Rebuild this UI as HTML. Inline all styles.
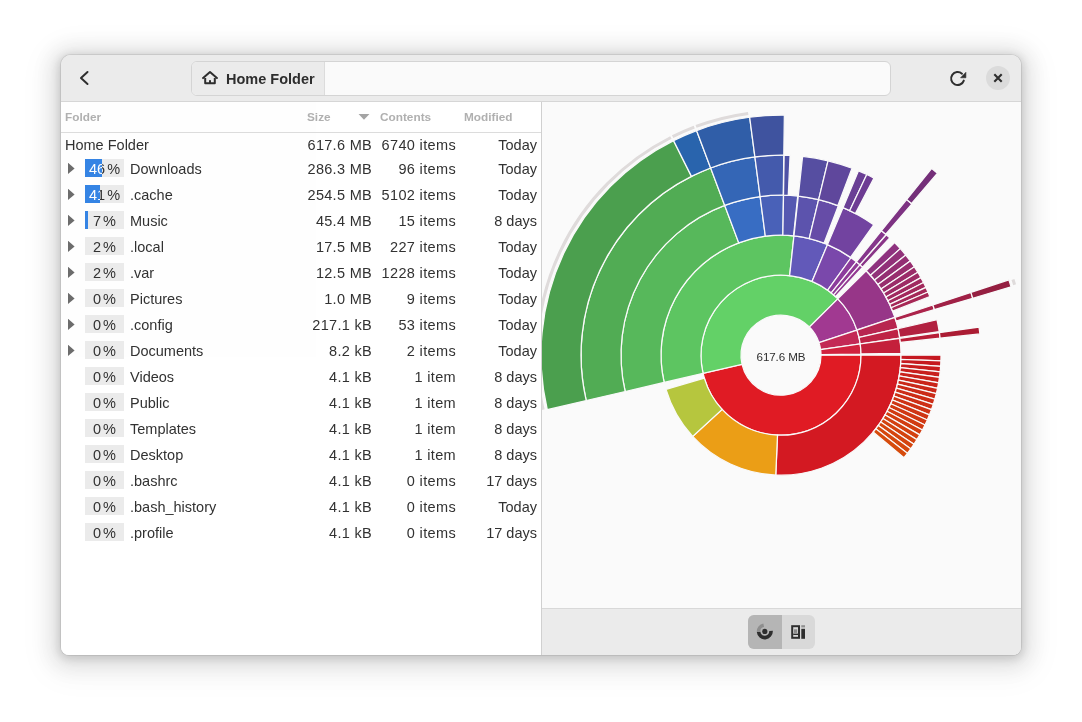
<!DOCTYPE html>
<html><head><meta charset="utf-8"><title>Disk Usage Analyzer</title>
<style>
html,body{margin:0;padding:0}
body{width:1082px;height:722px;background:#fff;overflow:hidden;position:relative;font-family:"Liberation Sans",sans-serif;font-size:14.5px;color:#323232}
#win{position:absolute;left:61px;top:55px;width:960px;height:600px;border-radius:10px 10px 8px 8px;background:#fafafa;overflow:hidden;
 box-shadow:0 2px 8px 2px rgba(0,0,0,.13),0 3px 20px 10px rgba(0,0,0,.09),0 6px 32px 16px rgba(0,0,0,.04),0 0 0 1px rgba(0,0,0,.07)}
#hdr{will-change:transform;opacity:.999;position:absolute;left:0;top:0;width:960px;height:46px;background:#ebebeb;border-bottom:1px solid #d6d6d6}
#path{position:absolute;left:130px;top:6px;width:698px;height:33px;border:1px solid #d4d4d4;border-radius:6px;background:#fafafa;overflow:hidden}
#crumb{position:absolute;left:0;top:0;width:132px;height:33px;background:#ebebeb;border-right:1px solid #dcdcdc}
#crumb span{position:absolute;left:34px;top:9px;font-weight:bold;font-size:14.5px;letter-spacing:0;color:#2e2e2e;white-space:nowrap}
#left{will-change:transform;opacity:.999;position:absolute;left:0;top:47px;width:480px;height:553px;background:#fff;border-right:1px solid #d0d0d0}
#colhdr{position:absolute;left:0;top:0;width:480px;height:30px;border-bottom:1px solid #dcdcdc;font-size:11.8px;color:#b0b0b0;font-weight:bold}
#colhdr span{position:absolute;top:8px}
.row{position:absolute;left:0;width:480px;height:26px;white-space:nowrap}
.row span{position:absolute;top:4px}
.row .n0{left:4px}
.row .n{left:69px}
.row .s{right:169px;text-align:right;letter-spacing:.3px}
.row .c{right:85px;text-align:right;letter-spacing:.35px}
.row .m{right:4px;text-align:right}
.row .p{left:24px;top:2px;width:39px;height:18px;background:#ebebeb}
.row .q{left:24px;top:4px;width:39px;text-align:center;word-spacing:-2px}
.row .f{left:24px;top:2px;height:18px;background:#3584e4;overflow:hidden}
.row .f b{position:absolute;left:0;top:2px;width:39px;text-align:center;color:#fff;font-weight:normal;word-spacing:-2px}
.row .t{left:7px;top:5.7px;width:6.6px;height:11.4px;background:#6c6c6c;clip-path:polygon(0 0,100% 50%,0 100%)}
#right{position:absolute;left:481px;top:47px;width:479px;height:506px;background:#fafafa}
#abar{position:absolute;left:481px;top:553px;width:479px;height:47px;background:#ebebeb;border-top:1px solid #d8d8d8;box-sizing:border-box}
#tog{position:absolute;left:206px;top:6px;width:67px;height:34px;border-radius:6px;background:#d9d9d9;overflow:hidden}
#tog b{position:absolute;left:0;top:0;width:34px;height:34px;background:#b5b5b5}
#chart{position:absolute;left:0;top:0;width:1082px;height:722px;pointer-events:none;opacity:.999;will-change:transform;clip-path:inset(102px 61px 114px 542px)}
</style></head><body>
<div id="win">
 <div id="hdr">
  <svg style="position:absolute;left:0;top:0" width="960" height="46" viewBox="0 0 960 46">
   <path d="M26.5 17 L20 23 L26.5 29" fill="none" stroke="#2e2e2e" stroke-width="2" stroke-linecap="round" stroke-linejoin="round"/>
   <g fill="none" stroke="#2e2e2e" stroke-width="2" stroke-linecap="round" stroke-linejoin="round">
    <path d="M902.8 25.6 A6.5 6.5 0 1 1 901.0 18.7"/>
   </g>
   <path d="M904.9 17.3 L904.9 22.8 L899.6 22.8 Z" fill="#2e2e2e" stroke="#2e2e2e" stroke-width=".6" stroke-linejoin="round"/>
   <circle cx="937" cy="23" r="12" fill="#dbdbdb"/>
   <path d="M933.3 19.3 L940.7 26.7 M940.7 19.3 L933.3 26.7" fill="none" stroke="#2e2e2e" stroke-width="2.1" stroke-linecap="butt"/>
  </svg>
  <div id="path"><div id="crumb"><svg style="position:absolute;left:10px;top:9px" width="16" height="16" viewBox="0 0 16 16"><path d="M1.1 7.1 L8 1.1 L14.9 7.1" fill="none" stroke="#2e2e2e" stroke-width="2" stroke-linejoin="round" stroke-linecap="round"/><path d="M3.2 7 V12.3 H12.8 V7" fill="none" stroke="#2e2e2e" stroke-width="2" stroke-linejoin="round"/><rect x="7" y="9.2" width="2" height="3.6" fill="#2e2e2e"/></svg><span>Home Folder</span></div></div>
 </div>
 <div id="left">
  <div id="colhdr"><span style="left:4px">Folder</span><span style="left:246px">Size</span><span style="left:319px">Contents</span><span style="left:403px">Modified</span><i style="position:absolute;left:297.3px;top:11.8px;width:11.4px;height:6px;background:#a4a4a4;clip-path:polygon(0 0,100% 0,50% 100%)"></i></div>
  <div class="row" style="top:31px;height:24px"><span class="n0">Home Folder</span><span class="s">617.6 MB</span><span class="c">6740 items</span><span class="m">Today</span></div>
  <div class="row" style="top:55px"><span class="t"></span><span class="p"></span><span class="q">46 %</span><span class="f" style="width:17.2px"><b>46 %</b></span><span class="n">Downloads</span><span class="s">286.3 MB</span><span class="c">96 items</span><span class="m">Today</span></div>
  <div class="row" style="top:81px"><span class="t"></span><span class="p"></span><span class="q">41 %</span><span class="f" style="width:15.2px"><b>41 %</b></span><span class="n">.cache</span><span class="s">254.5 MB</span><span class="c">5102 items</span><span class="m">Today</span></div>
  <div class="row" style="top:107px"><span class="t"></span><span class="p"></span><span class="q">7 %</span><span class="f" style="width:2.7px"><b>7 %</b></span><span class="n">Music</span><span class="s">45.4 MB</span><span class="c">15 items</span><span class="m">8 days</span></div>
  <div class="row" style="top:133px"><span class="t"></span><span class="p"></span><span class="q">2 %</span><span class="n">.local</span><span class="s">17.5 MB</span><span class="c">227 items</span><span class="m">Today</span></div>
  <div class="row" style="top:159px"><span class="t"></span><span class="p"></span><span class="q">2 %</span><span class="n">.var</span><span class="s">12.5 MB</span><span class="c">1228 items</span><span class="m">Today</span></div>
  <div class="row" style="top:185px"><span class="t"></span><span class="p"></span><span class="q">0 %</span><span class="n">Pictures</span><span class="s">1.0 MB</span><span class="c">9 items</span><span class="m">Today</span></div>
  <div class="row" style="top:211px"><span class="t"></span><span class="p"></span><span class="q">0 %</span><span class="n">.config</span><span class="s">217.1 kB</span><span class="c">53 items</span><span class="m">Today</span></div>
  <div class="row" style="top:237px"><span class="t"></span><span class="p"></span><span class="q">0 %</span><span class="n">Documents</span><span class="s">8.2 kB</span><span class="c">2 items</span><span class="m">Today</span></div>
  <div class="row" style="top:263px"><span class="p"></span><span class="q">0 %</span><span class="n">Videos</span><span class="s">4.1 kB</span><span class="c">1 item</span><span class="m">8 days</span></div>
  <div class="row" style="top:289px"><span class="p"></span><span class="q">0 %</span><span class="n">Public</span><span class="s">4.1 kB</span><span class="c">1 item</span><span class="m">8 days</span></div>
  <div class="row" style="top:315px"><span class="p"></span><span class="q">0 %</span><span class="n">Templates</span><span class="s">4.1 kB</span><span class="c">1 item</span><span class="m">8 days</span></div>
  <div class="row" style="top:341px"><span class="p"></span><span class="q">0 %</span><span class="n">Desktop</span><span class="s">4.1 kB</span><span class="c">1 item</span><span class="m">8 days</span></div>
  <div class="row" style="top:367px"><span class="p"></span><span class="q">0 %</span><span class="n">.bashrc</span><span class="s">4.1 kB</span><span class="c">0 items</span><span class="m">17 days</span></div>
  <div class="row" style="top:393px"><span class="p"></span><span class="q">0 %</span><span class="n">.bash_history</span><span class="s">4.1 kB</span><span class="c">0 items</span><span class="m">Today</span></div>
  <div class="row" style="top:419px"><span class="p"></span><span class="q">0 %</span><span class="n">.profile</span><span class="s">4.1 kB</span><span class="c">0 items</span><span class="m">17 days</span></div>
 </div>
 <div id="right"></div>
 <div id="abar"><div id="tog"><b></b></div>
  <svg style="position:absolute;left:0;top:-1px" width="479" height="47" viewBox="542 608 479 47">
   <circle cx="764.8" cy="631.4" r="2.6" fill="#2e2e2e"/>
   <path d="M771 630.9 A6.2 6.2 0 0 1 758.6 631.9" fill="none" stroke="#2e2e2e" stroke-width="3.6"/>
   <path d="M758.6 631.9 A6.2 6.2 0 0 1 763.7 625.3" fill="none" stroke="#8e8e8e" stroke-width="3.6"/>
   <rect x="792.2" y="626.2" width="6.8" height="11.6" fill="none" stroke="#2e2e2e" stroke-width="2"/>
   <rect x="794" y="629.3" width="3.2" height="3.6" fill="#8a8a8a"/>
   <rect x="793.2" y="633.6" width="4.8" height="1.4" fill="#2e2e2e"/>
   <rect x="801.3" y="628.8" width="3.7" height="10" fill="#2e2e2e"/>
   <rect x="801.3" y="625.2" width="3.7" height="2.2" fill="#8e8e8e"/>
  </svg></div>
</div>
<svg id="chart" viewBox="0 0 1082 722">
<g stroke="#fafafa" stroke-width="1.25" stroke-linejoin="miter">
<path d="M821.00 355.20A40 40 0 0 1 742.04 364.28L703.09 373.35A80 80 0 0 0 861.00 355.20Z" fill="#e01b24"/>
<path d="M742.04 364.28A40 40 0 0 1 809.40 327.03L837.80 298.86A80 80 0 0 0 703.09 373.35Z" fill="#63d167"/>
<path d="M809.40 327.03A40 40 0 0 1 818.98 342.64L856.95 330.08A80 80 0 0 0 837.80 298.86Z" fill="#a13991"/>
<path d="M818.98 342.64A40 40 0 0 1 820.60 349.56L860.20 343.92A80 80 0 0 0 856.95 330.08Z" fill="#c32955"/>
<path d="M820.60 349.56A40 40 0 0 1 821.00 354.63L860.99 354.06A80 80 0 0 0 860.20 343.92Z" fill="#d1223e"/>
<path d="M861.00 355.20A80 80 0 0 1 777.51 435.12L775.77 475.09A120 120 0 0 0 901.00 355.20Z" fill="#d31922"/>
<path d="M777.51 435.12A80 80 0 0 1 722.11 409.35L692.67 436.43A120 120 0 0 0 775.77 475.09Z" fill="#eb9e16"/>
<path d="M722.11 409.35A80 80 0 0 1 704.33 378.06L666.00 389.48A120 120 0 0 0 692.67 436.43Z" fill="#b6c63e"/>
<path d="M703.09 373.35A80 80 0 0 1 789.64 275.67L793.96 235.90A120 120 0 0 0 664.13 382.43Z" fill="#5dc561"/>
<path d="M789.64 275.67A80 80 0 0 1 812.00 281.45L827.50 244.58A120 120 0 0 0 793.96 235.90Z" fill="#6259b9"/>
<path d="M812.00 281.45A80 80 0 0 1 827.68 290.23L851.02 257.75A120 120 0 0 0 827.50 244.58Z" fill="#7a48ab"/>
<path d="M827.68 290.23A80 80 0 0 1 831.24 292.94L856.36 261.81A120 120 0 0 0 851.02 257.75Z" fill="#8c3c9c"/>
<path d="M831.24 292.94A80 80 0 0 1 833.64 294.96L859.96 264.84A120 120 0 0 0 856.36 261.81Z" fill="#8f3a95"/>
<path d="M833.64 294.96A80 80 0 0 1 835.46 296.60L862.69 267.29A120 120 0 0 0 859.96 264.84Z" fill="#923891"/>
<path d="M837.80 298.86A80 80 0 0 1 856.91 329.94L894.86 317.32A120 120 0 0 0 866.20 270.69Z" fill="#973688"/>
<path d="M856.95 330.08A80 80 0 0 1 859.01 337.48L898.02 328.61A120 120 0 0 0 894.93 317.51Z" fill="#b82650"/>
<path d="M859.01 337.48A80 80 0 0 1 860.18 343.79L899.77 338.08A120 120 0 0 0 898.02 328.61Z" fill="#be2345"/>
<path d="M860.20 343.92A80 80 0 0 1 860.99 353.99L900.99 353.39A120 120 0 0 0 899.80 338.29Z" fill="#c4203b"/>
<path d="M901.00 355.20A120 120 0 0 1 900.93 359.37L940.90 360.76A160 160 0 0 0 941.00 355.20Z" fill="#c51820"/>
<path d="M900.93 359.37A120 120 0 0 1 900.71 363.53L940.61 366.31A160 160 0 0 0 940.90 360.76Z" fill="#c61a1f"/>
<path d="M900.71 363.53A120 120 0 0 1 900.35 367.68L940.13 371.84A160 160 0 0 0 940.61 366.31Z" fill="#c71d1e"/>
<path d="M900.35 367.68A120 120 0 0 1 899.84 371.82L939.46 377.36A160 160 0 0 0 940.13 371.84Z" fill="#c8201d"/>
<path d="M899.84 371.82A120 120 0 0 1 899.20 375.93L938.59 382.85A160 160 0 0 0 939.46 377.36Z" fill="#c9231c"/>
<path d="M899.20 375.93A120 120 0 0 1 898.40 380.03L937.54 388.30A160 160 0 0 0 938.59 382.85Z" fill="#ca251a"/>
<path d="M898.40 380.03A120 120 0 0 1 897.47 384.09L936.29 393.72A160 160 0 0 0 937.54 388.30Z" fill="#ca2819"/>
<path d="M897.47 384.09A120 120 0 0 1 896.40 388.12L934.86 399.09A160 160 0 0 0 936.29 393.72Z" fill="#cb2b18"/>
<path d="M896.40 388.12A120 120 0 0 1 895.18 392.10L933.25 404.40A160 160 0 0 0 934.86 399.09Z" fill="#cc2d17"/>
<path d="M895.18 392.10A120 120 0 0 1 893.83 396.05L931.45 409.66A160 160 0 0 0 933.25 404.40Z" fill="#cd3016"/>
<path d="M893.83 396.05A120 120 0 0 1 892.35 399.94L929.46 414.85A160 160 0 0 0 931.45 409.66Z" fill="#ce3315"/>
<path d="M892.35 399.94A120 120 0 0 1 890.73 403.78L927.30 419.97A160 160 0 0 0 929.46 414.85Z" fill="#cf3514"/>
<path d="M890.73 403.78A120 120 0 0 1 888.97 407.56L924.97 425.01A160 160 0 0 0 927.30 419.97Z" fill="#d03813"/>
<path d="M888.97 407.56A120 120 0 0 1 887.09 411.28L922.45 429.97A160 160 0 0 0 924.97 425.01Z" fill="#d13b12"/>
<path d="M887.09 411.28A120 120 0 0 1 885.08 414.93L919.77 434.84A160 160 0 0 0 922.45 429.97Z" fill="#d23d11"/>
<path d="M885.08 414.93A120 120 0 0 1 882.94 418.51L916.92 439.61A160 160 0 0 0 919.77 434.84Z" fill="#d34010"/>
<path d="M882.94 418.51A120 120 0 0 1 880.68 422.01L913.91 444.28A160 160 0 0 0 916.92 439.61Z" fill="#d3430f"/>
<path d="M880.68 422.01A120 120 0 0 1 878.30 425.43L910.74 448.84A160 160 0 0 0 913.91 444.28Z" fill="#d4450e"/>
<path d="M878.30 425.43A120 120 0 0 1 875.81 428.77L907.41 453.29A160 160 0 0 0 910.74 448.84Z" fill="#d5480d"/>
<path d="M875.81 428.77A120 120 0 0 1 873.19 432.01L903.93 457.62A160 160 0 0 0 907.41 453.29Z" fill="#d64b0c"/>
<path d="M664.13 382.43A120 120 0 0 1 738.78 242.87L724.71 205.43A160 160 0 0 0 625.17 391.51Z" fill="#57b85b"/>
<path d="M738.78 242.87A120 120 0 0 1 765.34 236.23L760.12 196.57A160 160 0 0 0 724.71 205.43Z" fill="#386dc3"/>
<path d="M765.34 236.23A120 120 0 0 1 782.88 235.21L783.51 195.22A160 160 0 0 0 760.12 196.57Z" fill="#4961b8"/>
<path d="M782.88 235.21A120 120 0 0 1 793.54 235.86L797.72 196.08A160 160 0 0 0 783.51 195.22Z" fill="#5558b1"/>
<path d="M793.96 235.90A120 120 0 0 1 809.22 238.56L818.62 199.69A160 160 0 0 0 798.28 196.14Z" fill="#5c53ad"/>
<path d="M809.22 238.56A120 120 0 0 1 824.00 243.17L838.34 205.83A160 160 0 0 0 818.62 199.69Z" fill="#664ca7"/>
<path d="M827.50 244.58A120 120 0 0 1 850.51 257.38L873.68 224.78A160 160 0 0 0 843.00 207.70Z" fill="#7243a0"/>
<path d="M856.36 261.81A120 120 0 0 1 859.89 264.77L886.18 234.63A160 160 0 0 0 881.47 230.68Z" fill="#86368c"/>
<path d="M859.96 264.84A120 120 0 0 1 862.53 267.15L889.71 237.80A160 160 0 0 0 886.29 234.72Z" fill="#893587"/>
<path d="M866.20 270.69A120 120 0 0 1 870.50 275.27L900.34 248.62A160 160 0 0 0 894.60 242.52Z" fill="#8e327f"/>
<path d="M870.50 275.27A120 120 0 0 1 874.56 280.06L905.75 255.02A160 160 0 0 0 900.34 248.62Z" fill="#913179"/>
<path d="M874.56 280.06A120 120 0 0 1 877.94 284.47L910.25 260.89A160 160 0 0 0 905.75 255.02Z" fill="#942f73"/>
<path d="M877.94 284.47A120 120 0 0 1 881.05 288.94L914.40 266.85A160 160 0 0 0 910.25 260.89Z" fill="#982e6e"/>
<path d="M881.05 288.94A120 120 0 0 1 883.63 293.01L917.83 272.28A160 160 0 0 0 914.40 266.85Z" fill="#9b2c69"/>
<path d="M883.63 293.01A120 120 0 0 1 885.94 296.99L920.92 277.59A160 160 0 0 0 917.83 272.28Z" fill="#9d2b65"/>
<path d="M885.94 296.99A120 120 0 0 1 887.90 300.69L923.54 282.52A160 160 0 0 0 920.92 277.59Z" fill="#a02a60"/>
<path d="M887.90 300.69A120 120 0 0 1 889.70 304.36L925.93 287.41A160 160 0 0 0 923.54 282.52Z" fill="#a2295c"/>
<path d="M889.70 304.36A120 120 0 0 1 891.24 307.80L927.99 292.00A160 160 0 0 0 925.93 287.41Z" fill="#a42858"/>
<path d="M891.24 307.80A120 120 0 0 1 892.64 311.19L929.85 296.52A160 160 0 0 0 927.99 292.00Z" fill="#a62755"/>
<path d="M894.93 317.51A120 120 0 0 1 896.03 321.02L934.37 309.62A160 160 0 0 0 932.91 304.95Z" fill="#ac244b"/>
<path d="M898.02 328.61A120 120 0 0 1 899.68 337.46L939.24 331.55A160 160 0 0 0 937.02 319.75Z" fill="#b22140"/>
<path d="M899.80 338.29A120 120 0 0 1 900.32 342.45L940.09 338.20A160 160 0 0 0 939.40 332.65Z" fill="#b81e37"/>
<path d="M625.17 391.51A160 160 0 0 1 724.71 205.43L710.63 167.99A200 200 0 0 0 586.22 400.58Z" fill="#51ac54"/>
<path d="M724.71 205.43A160 160 0 0 1 760.12 196.57L754.89 156.91A200 200 0 0 0 710.63 167.99Z" fill="#3466b6"/>
<path d="M760.12 196.57A160 160 0 0 1 783.23 195.22L783.79 155.22A200 200 0 0 0 754.89 156.91Z" fill="#445aac"/>
<path d="M783.51 195.22A160 160 0 0 1 788.26 195.36L790.07 155.41A200 200 0 0 0 784.14 155.22Z" fill="#4f52a5"/>
<path d="M798.28 196.14A160 160 0 0 1 818.62 199.69L828.03 160.81A200 200 0 0 0 802.60 156.37Z" fill="#564ea1"/>
<path d="M818.62 199.69A160 160 0 0 1 837.82 205.63L852.02 168.23A200 200 0 0 0 828.03 160.81Z" fill="#5f479c"/>
<path d="M843.00 207.70A160 160 0 0 1 849.63 210.67L866.79 174.53A200 200 0 0 0 858.50 170.83Z" fill="#6a3f95"/>
<path d="M849.63 210.67A160 160 0 0 1 855.37 213.54L873.97 178.12A200 200 0 0 0 866.79 174.53Z" fill="#6d3c93"/>
<path d="M881.47 230.68A160 160 0 0 1 885.76 234.26L911.95 204.03A200 200 0 0 0 906.59 199.55Z" fill="#7d3282"/>
<path d="M932.91 304.95A160 160 0 0 1 934.37 309.62L972.71 298.23A200 200 0 0 0 970.88 292.39Z" fill="#a02146"/>
<path d="M939.40 332.65A160 160 0 0 1 940.09 338.20L979.87 333.95A200 200 0 0 0 979.00 327.01Z" fill="#ab1c33"/>
<path d="M586.22 400.58A200 200 0 0 1 691.45 176.37L673.54 140.60A240 240 0 0 0 547.26 409.66Z" fill="#4b9f4e"/><path d="M543.15 409.62A244 244 0 0 1 670.87 137.47" fill="none" stroke="#dfdbdb" stroke-width="3"/>
<path d="M691.45 176.37A200 200 0 0 1 710.63 167.99L696.56 130.55A240 240 0 0 0 673.54 140.60Z" fill="#2964ad"/><path d="M672.62 136.59A244 244 0 0 1 694.24 127.15" fill="none" stroke="#dfdbdb" stroke-width="3"/>
<path d="M710.63 167.99A200 200 0 0 1 754.89 156.91L749.67 117.25A240 240 0 0 0 696.56 130.55Z" fill="#305ea8"/><path d="M696.06 126.46A244 244 0 0 1 748.18 113.42" fill="none" stroke="#dfdbdb" stroke-width="3"/>
<path d="M754.89 156.91A200 200 0 0 1 783.79 155.22L784.35 115.22A240 240 0 0 0 749.67 117.25Z" fill="#3f539f"/>
<path d="M906.59 199.55A200 200 0 0 1 911.42 203.57L937.50 173.25A240 240 0 0 0 931.71 168.42Z" fill="#742f79"/>
<path d="M970.88 292.39A200 200 0 0 1 972.71 298.23L1011.06 286.84A240 240 0 0 0 1008.86 279.83Z" fill="#951f41"/><path d="M1012.96 279.50A244 244 0 0 1 1014.61 284.76" fill="none" stroke="#dfdbdb" stroke-width="3"/>
</g>
<text x="781" y="360.500" text-anchor="middle" font-family="Liberation Sans, sans-serif" font-size="11.6" letter-spacing="-.1" fill="#2e2e2e">617.6 MB</text>
</svg>
</body></html>
